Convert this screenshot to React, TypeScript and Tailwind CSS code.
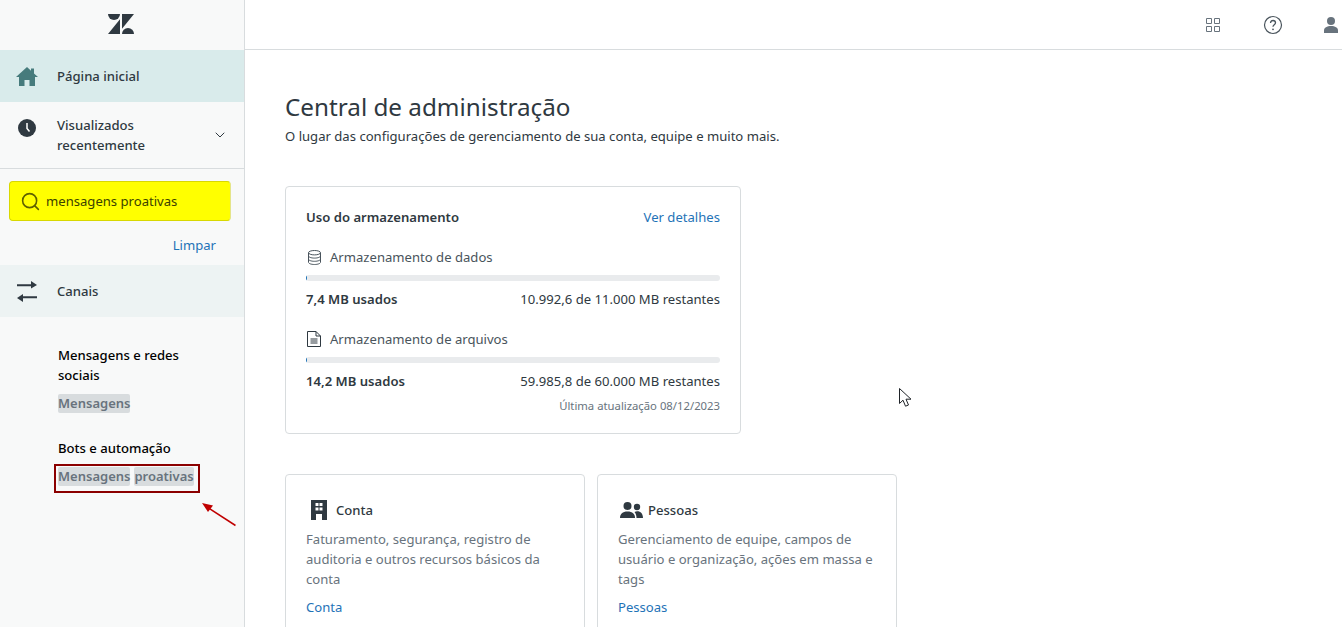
import { ChevronDown, Search } from "lucide-react";

const ZendeskLogo = () => (
  <svg width="26" height="20" viewBox="0 0 26 20" fill="#2f3941">
    <path d="M12 5.2V20H0L12 5.2Z" />
    <path d="M12 0a6 6 0 0 1-12 0h12Z" />
    <path d="M14 14.8V0h12L14 14.8Z" />
    <path d="M14 20a6 6 0 0 1 12 0H14Z" />
  </svg>
);

const HomeIcon = () => (
  <svg width="22" height="19" viewBox="0 0 22 19" fill="#467b7c">
    <path d="M11 0 0 10h3v9h5.500v-6h5v6H19v-9h3L18 6.400V1.500h-3v2.200L11 0Z" />
  </svg>
);

const ClockIcon = () => (
  <svg width="18" height="18" viewBox="0 0 18 18">
    <circle cx="9" cy="9" r="9" fill="#2f3941" />
    <path d="M9 4v5.500l2.500 3" fill="none" stroke="#fff" strokeWidth="1.500" />
  </svg>
);

const SwapIcon = () => (
  <svg width="20" height="21" viewBox="0 0 20 21" fill="#2f3941">
    <path d="M0 3.200h14V0l6 3.900-6 3.600V5.200H0Z" />
    <path d="M20 15.200H6V13l-6 4 6 4v-3.800h14Z" />
  </svg>
);

const DatabaseIcon = () => (
  <svg width="13" height="15" viewBox="0 0 13 15" fill="none" stroke="#49545c">
    <ellipse cx="6.500" cy="2.700" rx="6" ry="2.200" />
    <path d="M.5 2.700v9.600c0 1.200 2.700 2.200 6 2.200s6-1 6-2.200V2.700" />
    <path d="M.5 5.900c0 1.200 2.700 2.200 6 2.200s6-1 6-2.200M.5 9.100c0 1.200 2.700 2.200 6 2.200s6-1 6-2.200" />
  </svg>
);

const FileIcon = () => (
  <svg width="14" height="16" viewBox="0 0 14 16" fill="none" stroke="#2f3941">
    <path d="M.5.500h8.500l4.500 4.500v10.500H.5V.500Z" />
    <path d="M9 .500V5h4.500M3.500 8h7M3.500 10h7M3.500 12h7" />
  </svg>
);

const BuildingIcon = () => (
  <svg width="16" height="20" viewBox="0 0 16 20" className="ml-[5px]">
    <path fillRule="evenodd" fill="#2f3941" d="M0 0h16v20h-5v-6H5v6H0V0Zm4.500 3v3h3V3h-3Zm4 0v3h3V3h-3Zm-4 4.500v3h3v-3h-3Zm4 0v3h3v-3h-3Z" />
  </svg>
);

const PeopleIcon = () => (
  <svg width="23" height="16" viewBox="0 0 23 16" fill="#2f3941" className="ml-[2px]">
    <circle cx="7.500" cy="4" r="4" />
    <path d="M0 16c0-4 2.500-6.500 7.500-6.500S15 12 15 16H0Z" />
    <circle cx="17" cy="5" r="3.200" />
    <path d="M16.500 16c0-2.500-.7-4.500-2-6 .8-.5 1.700-.7 2.700-.7 3.500 0 5.800 2.500 5.800 6.700h-6.500Z" />
  </svg>
);

const Cursor = () => (
  <svg width="14" height="20" viewBox="0 0 14 20" fill="#fff" stroke="#1f2328" className="absolute left-[899px] top-[388px]">
    <path d="M.500.500v15l3.500-3.300 2.500 6 3-1.200-2.500-5.800h5L.500.500Z" />
  </svg>
);

const Arrow = () => (
  <svg width="36" height="26" viewBox="0 0 36 26" className="absolute left-[201px] top-[501px]">
    <path d="M34.500 24.500 6 6" stroke="#c00000" strokeWidth="1.500" fill="none" />
    <path d="M1 2 12 4.500 7 11 1 2Z" fill="#c00000" />
  </svg>
);

const Hit = ({ children }: { children: string }) => (
  <span className="inline-block h-[19px] rounded-[2px] bg-[#d8dcde] text-[13px] font-semibold leading-[19px] text-[#68737d]">{children}</span>
);

function StorageRow({ icon, label, used, rest }: { icon: React.ReactNode; label: string; used: string; rest: string }) {
  return (
    <div>
      <div className="flex h-5 items-center gap-[9px] text-[#49545c]">
        <span className="ml-[1px] flex w-[14px] justify-center">{icon}</span>
        {label}
      </div>
      <div className="mt-[8px] h-[6px] overflow-hidden rounded-[3px] bg-[#e9ebed]">
        <div className="h-full w-[1px] bg-[#1f73b7]" />
      </div>
      <div className="mt-[8px] flex h-5 justify-between">
        <span className="font-semibold">{used}</span>
        <span>{rest}</span>
      </div>
    </div>
  );
}

function SmallCard({ icon, title, text, link }: { icon: React.ReactNode; title: string; text: string; link: string }) {
  return (
    <div className="h-[190px] w-[300px] shrink-0 rounded-[4px] border border-[#d8dcde] bg-white px-[20px] pt-[25px]">
      <div className="flex h-5 items-center font-medium text-[#2f3941]">
        <span className="flex w-[30px] items-center">{icon}</span>
        <span>{title}</span>
      </div>
      <p className="mt-[9px] text-[#68737d]">{text}</p>
      <a className="mt-[8px] block text-[#1f73b7]">{link}</a>
    </div>
  );
}

export default function App() {
  return (
    <div className="relative flex h-[627px] w-[1342px] overflow-hidden bg-white font-['Noto_Sans',sans-serif] text-[13.1px] leading-5 text-[#2f3941]">
      <aside className="w-[245px] shrink-0 border-r border-[#d8dcde] bg-[#f8f9f9]">
        <div className="flex h-[50px] items-center justify-center pb-[2px] pr-[2px]">
          <ZendeskLogo />
        </div>
        <div className="flex h-[52px] items-center bg-[#d9ebeb] pl-[16px]">
          <span className="flex w-[41px]">
            <HomeIcon />
          </span>
          <span className="font-medium">Página inicial</span>
        </div>
        <div className="flex h-[67px] items-start border-b border-[#d8dcde] pl-[18px] pt-[13px]">
          <span className="mt-[4px] flex w-[39px]">
            <ClockIcon />
          </span>
          <span className="w-[130px] font-medium">Visualizados recentemente</span>
          <ChevronDown size={16} strokeWidth={1.5} className="ml-auto mr-[16px] mt-[12px]" />
        </div>
        <div className="mx-[9px] mt-[12px] flex h-[40px] w-[222px] items-center rounded-[4px] border border-[#d8d800] border-r-[#e4e48a] bg-[#ffff00] pl-[10px]">
          <Search size={21} strokeWidth={1.8} className="text-[#5e6000]" />
          <span className="ml-[5px] text-[#3c4200]">mensagens proativas</span>
        </div>
        <div className="mt-[14px] h-[20px] pr-[28px] text-right text-[#1f73b7]">Limpar</div>
        <div className="mt-[10px] flex h-[52px] items-center bg-[#edf3f3] pl-[17px]">
          <span className="flex w-[40px]">
            <SwapIcon />
          </span>
          <span className="font-medium">Canais</span>
        </div>
        <div className="pl-[58px] pr-[40px] pt-[28px]">
          <div className="font-medium text-black">Mensagens e redes sociais</div>
          <div className="mt-[9px] flex">
            <Hit>Mensagens</Hit>
          </div>
          <div className="mt-[25px] font-medium text-black">Bots e automação</div>
          <div className="mt-[9px] flex gap-[4px]">
            <Hit>Mensagens</Hit>
            <Hit>proativas</Hit>
          </div>
        </div>
      </aside>

      <div className="min-w-0 flex-1">
        <header className="flex h-[50px] items-center justify-end border-b border-[#d8dcde] bg-white pr-[4px]">
          <svg width="16" height="16" viewBox="0 0 16 16" fill="none" stroke="#68737d" className="mr-[42px]">
            <path d="M1.500 1.500h5v5h-5zM9.500 1.500h5v5h-5zM1.500 9.500h5v5h-5zM9.500 9.500h5v5h-5z" />
          </svg>
          <svg width="20" height="20" viewBox="0 0 20 20" className="mr-[41px]">
            <circle cx="10" cy="10" r="8.500" fill="none" stroke="#49545c" strokeWidth="1.200" />
            <path d="M7.500 8c0-1.500 1-2.500 2.500-2.500s2.500 1 2.500 2.300c0 2-2.500 2-2.500 4" fill="none" stroke="#49545c" strokeWidth="1.300" />
            <circle cx="10" cy="14.300" r="0.900" fill="#49545c" />
          </svg>
          <svg width="14" height="16" viewBox="0 0 14 16" fill="#68737d" className="shrink-0">
            <circle cx="7" cy="4" r="4" />
            <path d="M0 16v-2.500C0 10.500 3 9 7 9s7 1.500 7 4.500V16H0Z" />
          </svg>
        </header>
        <main className="pl-[40px] pt-[42px]">
          <h1 className="text-[24.250px] leading-[30px] text-[#2f3941]">Central de administração</h1>
          <p className="mt-[4px] text-[#2f3941]">O lugar das configurações de gerenciamento de sua conta, equipe e muito mais.</p>

          <section className="mt-[40px] h-[248px] w-[456px] rounded-[4px] border border-[#d8dcde] bg-white px-[20px] pt-[20px]">
            <div className="flex h-5 justify-between">
              <span className="font-semibold">Uso do armazenamento</span>
              <a className="text-[#1f73b7]">Ver detalhes</a>
            </div>
            <div className="mt-[20px] flex flex-col gap-[20px]">
              <StorageRow icon={<DatabaseIcon />} label="Armazenamento de dados" used="7,4 MB usados" rest="10.992,6 de 11.000 MB restantes" />
              <StorageRow icon={<FileIcon />} label="Armazenamento de arquivos" used="14,2 MB usados" rest="59.985,8 de 60.000 MB restantes" />
            </div>
            <div className="mt-[5px] text-right text-[11.300px] text-[#68737d]">Última atualização 08/12/2023</div>
          </section>

          <div className="mt-[40px] flex gap-[12px]">
            <SmallCard icon={<BuildingIcon />} title="Conta" text="Faturamento, segurança, registro de auditoria e outros recursos básicos da conta" link="Conta" />
            <SmallCard icon={<PeopleIcon />} title="Pessoas" text="Gerenciamento de equipe, campos de usuário e organização, ações em massa e tags" link="Pessoas" />
          </div>
        </main>
      </div>

      <div className="absolute left-[54px] top-[464px] h-[29px] w-[146px] border-2 border-[#8b0000]" />
      <Arrow />
      <Cursor />
    </div>
  );
}
